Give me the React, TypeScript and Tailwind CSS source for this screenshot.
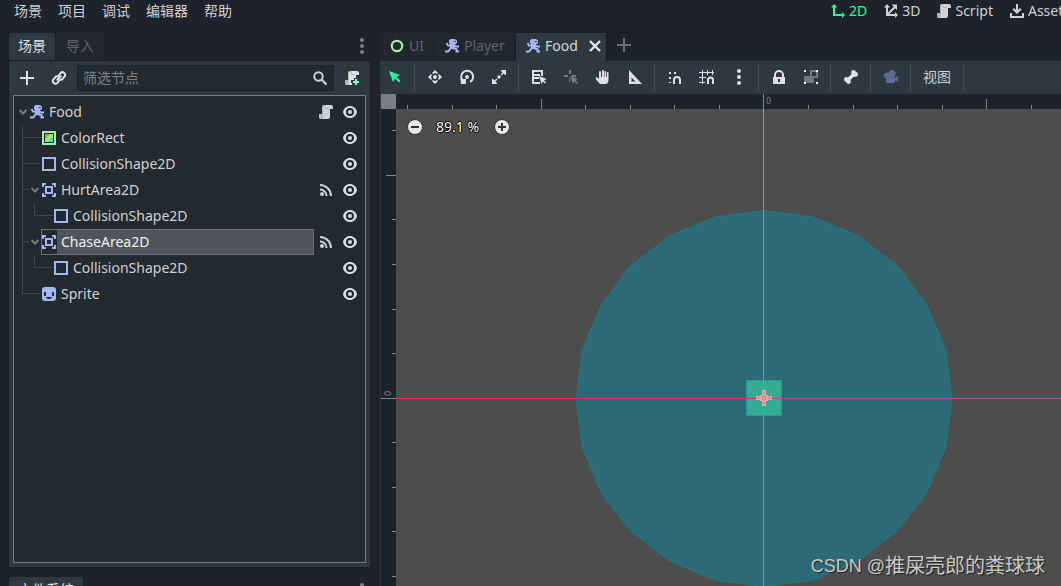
import { useState, type ReactNode } from "react";
import { clsx } from "clsx";

type IconProps = { className?: string };

function Svg({ className, children }: { className?: string; children: ReactNode }) {
  return (
    <svg className={clsx("size-4 shrink-0", className)} viewBox="0 0 16 16" fill="currentColor" aria-hidden="true">
      {children}
    </svg>
  );
}

const RunnerIcon = ({ className }: IconProps) => (
  <Svg className={clsx("text-[#a5b7f3]", className)}>
    <path d="M6.500 1H11l2 1.500V5l-2 1.500H7L5 5V2.500z" />
    <path d="M6 6h5v5H6z" />
    <path d="M7 7.500H4L2.500 5M10 7l2 1.500h3M7 9.500 5.500 12 4 13.500H1M9 10.500l3.500.5v2.500H15" fill="none" stroke="currentColor" strokeWidth="2" />
    <path d="M9.500 3H12v1H9.500z" className="fill-[#3d4764]" />
  </Svg>
);

const ScriptIcon = ({ className }: IconProps) => (
  <Svg className={className}>
    <path d="M6 1a1 1 0 0 0-1 1v11H4v-2H1v2a2 2 0 0 0 2 2h7a2 2 0 0 0 2-2V5h3V3a2 2 0 0 0-2-2z" />
    <path d="M6 1a2 2 0 0 0-2 2v7H1v3a2 2 0 0 0 4 0V3a1 1 0 0 1 2 0v2h4V4H8V3a2 2 0 0 0-2-2z" className="fill-[#b4b6b8]" />
  </Svg>
);

const ScriptCreateIcon = () => (
  <Svg>
    <path d="M6 1a1 1 0 0 0-1 1v11H4v-2H1v2a2 2 0 0 0 2 2h5v-2h-1v-3h3V8h2V5h3V3a2 2 0 0 0-2-2z" />
    <path d="M6 1a2 2 0 0 0-2 2v7H1v3a2 2 0 0 0 4 0V3a1 1 0 0 1 2 0v2h4V4H8V3a2 2 0 0 0-2-2z" className="fill-[#b4b6b8]" />
    <path d="M11 9h2v2h2v2h-2v2h-2v-2H9v-2h2z" className="fill-[#84ffb1]" />
  </Svg>
);

const AddIcon = ({ className }: IconProps) => (
  <Svg className={className}>
    <path d="M7 1v6H1v2h6v6h2V9h6V7H9V1z" />
  </Svg>
);

const LinkIcon = () => (
  <Svg>
    <g fill="none" stroke="currentColor" strokeWidth="2" strokeLinecap="round">
      <path d="M7 6.500 9.500 3.200a2.600 2.600 0 0 1 4 3.400L11 9.500 8.500 9.700" />
      <path d="M9 9.500 6.500 12.800a2.600 2.600 0 0 1-4-3.400L5 6.500l2.500-.2" />
      <path d="M6.200 9.800 9.800 6.200" />
    </g>
  </Svg>
);

const SearchIcon = () => (
  <Svg>
    <path d="M9.500 9.500 14.500 14.500" stroke="currentColor" strokeWidth="2.200" />
    <circle cx="6.500" cy="6.500" r="4.200" fill="none" stroke="currentColor" strokeWidth="2" />
  </Svg>
);

const DotsIcon = ({ className }: IconProps) => (
  <Svg className={className}>
    <circle cx="8" cy="2" r="2" />
    <circle cx="8" cy="8" r="2" />
    <circle cx="8" cy="14" r="2" />
  </Svg>
);

const EyeIcon = () => (
  <Svg>
    <path
      fillRule="evenodd"
      d="M8 2C4.500 2 1.700 4.500 1 8c.7 3.500 3.500 6 7 6s6.300-2.500 7-6c-.7-3.500-3.500-6-7-6zm0 2a4 4 0 0 1 0 8 4 4 0 0 1 0-8z"
    />
    <circle cx="8" cy="8" r="2" />
  </Svg>
);

const SignalIcon = () => (
  <Svg>
    <circle cx="4" cy="12" r="2" />
    <path d="M2 7.500a6.500 6.500 0 0 1 6.500 6.500M2 3a11 11 0 0 1 11 11" fill="none" stroke="currentColor" strokeWidth="2" />
  </Svg>
);

const ColorRectIcon = () => (
  <Svg>
    <path d="M2 2h12v12H2z" fill="none" stroke="#a5efac" strokeWidth="2" />
    <path d="M4 4h4.500L4 8.500z" className="fill-[#ff7070]" />
    <path d="M8.500 4H12v3.500L7.500 12H4V8.500z" className="fill-[#7aff70]" />
    <path d="M12 7.500V12H7.500z" className="fill-[#70bfff]" />
  </Svg>
);

const ShapeIcon = () => (
  <Svg className="text-[#a5b7f3]">
    <path d="M2 2h12v12H2z" fill="none" stroke="currentColor" strokeWidth="2" />
  </Svg>
);

const AreaIcon = () => (
  <Svg className="text-[#a5b7f3]">
    <path d="M2 5V2h3M11 2h3v3M14 11v3h-3M5 14H2v-3M5 5h6v6H5z" fill="none" stroke="currentColor" strokeWidth="2" />
  </Svg>
);

const SpriteIcon = () => (
  <Svg className="text-[#a5b7f3]">
    <path
      fillRule="evenodd"
      d="M4 1h8a3 3 0 0 1 3 3v8a3 3 0 0 1-3 3H4a3 3 0 0 1-3-3V4a3 3 0 0 1 3-3zM3 6v4h2V6zm8 0v4h2V6zM5 11c.5 2.700 5.500 2.700 6 0z"
    />
  </Svg>
);

const ChevronIcon = () => (
  <svg className="h-2 w-2.5" viewBox="0 0 10 8" fill="none" stroke="#767c80" strokeWidth="2" aria-hidden="true">
    <path d="m1.500 2 3.500 3.500L8.500 2" />
  </svg>
);

const Icon2D = () => (
  <Svg className="text-[#21ff9a]">
    <path d="M4 3v9h9" fill="none" stroke="currentColor" strokeWidth="2" />
    <path d="M4 1l3 3.500H1zM15 12l-3 3V9z" />
  </Svg>
);

const Icon3D = () => (
  <Svg>
    <path d="M4 3v9h9M4 12l8-8" fill="none" stroke="currentColor" strokeWidth="2" />
    <path d="M4 1l3 3.500H1zM15 12l-3 3V9zM8.500 1.500H14v5.500z" />
  </Svg>
);

const AssetIcon = () => (
  <Svg>
    <path d="M8 1v7M2 10v4h12v-4" fill="none" stroke="currentColor" strokeWidth="2" />
    <path d="m8 11 4.500-4.500L11 5 8 8 5 5 3.500 6.500z" />
  </Svg>
);

const SelectIcon = () => (
  <Svg className="text-[#21ff9a]">
    <path d="m2 2 4 11 2-3.500 4 4 1.500-1.500-4-4L13 6z" />
  </Svg>
);

const MoveIcon = () => (
  <Svg>
    <path d="m8 1 3 3-1 1-2-1-2 1-1-1zM8 15l3-3-1-1-2 1-2-1-1 1zM1 8l3-3 1 1-1 2 1 2-1 1zM15 8l-3-3-1 1 1 2-1 2 1 1z" />
    <circle cx="8" cy="8" r="2" />
  </Svg>
);

const RotateIcon = () => (
  <Svg>
    <path d="M4.500 12.500A6 6 0 1 1 11 13" fill="none" stroke="currentColor" strokeWidth="2" />
    <path d="M1.500 10H7v5H2z" />
    <circle cx="8" cy="8" r="2" />
  </Svg>
);

const ScaleIcon = () => (
  <Svg>
    <path d="M10 1h5v5h-1l-1.500-1.500-2 2-1-1 2-2L10 2zM1 10v5h5v-1l-1.500-1.500 2-2-1-1-2 2L2 10z" />
    <circle cx="8" cy="8" r="1.700" />
  </Svg>
);

const ListSelectIcon = () => (
  <Svg>
    <path d="M1 1h11v6h-2V3H3v2h6v2H3v1h5v2H3v3h6v2H1z" />
    <path d="m8 7 2.500 8 1.500-2.500 2 2 1-1-2-2L15.500 10z" />
  </Svg>
);

const PivotIcon = () => (
  <Svg className="text-[#747b80]">
    <path d="M6 1h2v4H6zM1 6h4v2H1zM9 6h4v2H9zM6 9h1v4H6zM7 7l3 8 1.500-2.500 2.500 2.500 1-1-2.500-2.500L15 10z" />
  </Svg>
);

const HandIcon = () => (
  <Svg>
    <path d="M8 1a1 1 0 0 0-1 1v6H6V3a1 1 0 0 0-2 0v7L2.800 8.700a1.200 1.200 0 0 0-1.900 1.500L4.500 14.500c.5.400 1 .5 1.500.5h4c2 0 3.500-1.500 3.500-4V4a.9.9 0 0 0-1.800 0v4H11V2.500a1 1 0 0 0-1.500 0V8H9V2a1 1 0 0 0-1-1z" />
  </Svg>
);

const RulerIcon = () => (
  <Svg>
    <path fillRule="evenodd" d="M2 1v14h13zm2.500 7.500 4 4h-4z" />
  </Svg>
);

const SnapIcon = () => (
  <Svg>
    <path d="M2 3h2v2H2zM7 3h2v2H7zM2 8h2v2H2zM2 13h2v1H2z" />
    <path d="M7 15v-4a3 3 0 0 1 6 0v4" fill="none" stroke="currentColor" strokeWidth="2" />
  </Svg>
);

const SnapGridIcon = () => (
  <Svg>
    <path d="M3.500 1v14M8.500 1v5M13.500 1v5M0 3.500h15M0 8.500h7M0 13.500h6" fill="none" stroke="currentColor" />
    <path d="M9 15v-4a2.500 2.500 0 0 1 5 0v4" fill="none" stroke="currentColor" strokeWidth="2" />
  </Svg>
);

const LockIcon = () => (
  <Svg>
    <path
      fillRule="evenodd"
      d="M8 1a5 5 0 0 0-5 5v2H2v7h12V8h-1V6a5 5 0 0 0-5-5zm0 2a3 3 0 0 1 3 3v2H5V6a3 3 0 0 1 3-3zM7 10h2v3H7z"
    />
  </Svg>
);

const GroupIcon = () => (
  <Svg>
    <path fillRule="evenodd" d="M7 1h8v8h-4v5H1V7h6zm2 2v4h4V3z" className="fill-[#747a7f]" />
    <path d="M1 1h2v2H1zM13 1h2v2h-2zM1 13h2v2H1zM13 13h2v2h-2z" className="fill-white" />
  </Svg>
);

const BoneIcon = () => (
  <Svg>
    <path d="m4.500 11.500 7-7" stroke="currentColor" strokeWidth="3.600" />
    <circle cx="10.500" cy="3.500" r="2.400" />
    <circle cx="12.600" cy="5.500" r="2.400" />
    <circle cx="3.400" cy="10.500" r="2.400" />
    <circle cx="5.500" cy="12.500" r="2.400" />
  </Svg>
);

const CameraIcon = () => (
  <Svg className="text-[#5c6c93]">
    <circle cx="9" cy="4.500" r="3.500" />
    <circle cx="4" cy="6.500" r="3" />
    <path d="M3 6h9v3l3-2v6l-3-2v1.500c0 .8-.5 1.500-1.500 1.500h-6C3.500 14 3 13.500 3 12.500z" />
  </Svg>
);

const CloseIcon = () => (
  <Svg className="text-[#e6e8e9]">
    <path d="m3 3 10 10M13 3 3 13" stroke="currentColor" strokeWidth="2.400" />
  </Svg>
);

const RingIcon = () => (
  <Svg>
    <circle cx="8" cy="8" r="5.200" fill="none" stroke="#a5efac" strokeWidth="2.200" />
  </Svg>
);

type TreeNode = {
  id: string;
  name: string;
  icon: () => ReactNode;
  level: 0 | 1 | 2;
  open?: boolean;
  script?: boolean;
  signal?: boolean;
  last?: boolean;
};

const NODES: TreeNode[] = [
  { id: "food", name: "Food", icon: () => <RunnerIcon />, level: 0, open: true, script: true },
  { id: "rect", name: "ColorRect", icon: ColorRectIcon, level: 1 },
  { id: "shape", name: "CollisionShape2D", icon: ShapeIcon, level: 1 },
  { id: "hurt", name: "HurtArea2D", icon: AreaIcon, level: 1, open: true, signal: true },
  { id: "hurt-shape", name: "CollisionShape2D", icon: ShapeIcon, level: 2, last: true },
  { id: "chase", name: "ChaseArea2D", icon: AreaIcon, level: 1, open: true, signal: true },
  { id: "chase-shape", name: "CollisionShape2D", icon: ShapeIcon, level: 2, last: true },
  { id: "sprite", name: "Sprite", icon: SpriteIcon, level: 1, last: true },
];

const MENUS = ["场景", "项目", "调试", "编辑器", "帮助"];

const MODES = [
  { label: "2D", icon: <Icon2D />, active: true },
  { label: "3D", icon: <Icon3D /> },
  { label: "Script", icon: <ScriptIcon /> },
  { label: "AssetLib", icon: <AssetIcon /> },
];

const TOOLS: { label: string; icon: ReactNode }[][] = [
  [
    { label: "移动模式", icon: <MoveIcon /> },
    { label: "旋转模式", icon: <RotateIcon /> },
    { label: "缩放模式", icon: <ScaleIcon /> },
  ],
  [
    { label: "列表选择", icon: <ListSelectIcon /> },
    { label: "轴心", icon: <PivotIcon /> },
    { label: "平移模式", icon: <HandIcon /> },
    { label: "标尺模式", icon: <RulerIcon /> },
  ],
  [
    { label: "智能吸附", icon: <SnapIcon /> },
    { label: "栅格吸附", icon: <SnapGridIcon /> },
    { label: "吸附选项", icon: <DotsIcon /> },
  ],
  [
    { label: "锁定", icon: <LockIcon /> },
    { label: "编组", icon: <GroupIcon /> },
  ],
  [{ label: "骨骼", icon: <BoneIcon /> }],
  [{ label: "相机", icon: <CameraIcon /> }],
];

function Guide({ className, last }: { className: string; last?: boolean }) {
  return (
    <span className={clsx("flex h-full shrink-0 flex-col", className)}>
      <span className="h-[13px] border-b border-l border-[#3f474d]" />
      {!last && <span className="flex-1 border-l border-[#3f474d]" />}
    </span>
  );
}

function TreeRow({ node, selected, onSelect }: { node: TreeNode; selected: boolean; onSelect: () => void }) {
  const Icon = node.icon;
  return (
    <li className={clsx("flex h-[26px] items-center pr-[3px]", node.level === 0 ? "pl-0.5" : "pl-2")}>
      {node.level === 1 && <Guide className={node.open ? "w-[7px]" : "w-[19px]"} last={node.last} />}
      {node.level === 2 && (
        <>
          <span className="h-full w-3 shrink-0 border-l border-[#3f474d]" />
          <Guide className="w-[19px]" last={node.last} />
        </>
      )}
      {node.open && (
        <button
          type="button"
          aria-label="折叠"
          className={clsx("flex shrink-0 items-center justify-center", node.level === 0 ? "w-[13px]" : "w-3")}
        >
          <ChevronIcon />
        </button>
      )}
      <button
        type="button"
        onClick={onSelect}
        className={clsx(
          "flex h-full min-w-0 flex-1 items-center border text-left",
          selected ? "border-[#6b7074] bg-[#50555a] text-[#f0f1f1]" : "border-transparent",
        )}
      >
        <span className={clsx("flex h-full w-[15px] shrink-0 items-center justify-end", selected && "bg-[#22292f]")}>
          <Icon />
        </span>
        <span className="truncate pl-1">{node.name}</span>
      </button>
      <span className="flex w-6 shrink-0 justify-center">
        {node.script && <button type="button" aria-label="打开脚本"><ScriptIcon /></button>}
        {node.signal && <button type="button" aria-label="信号"><SignalIcon /></button>}
      </span>
      <button type="button" aria-label="切换可见性" className="flex w-6 shrink-0 justify-center text-[#dcdddd]">
        <EyeIcon />
      </button>
    </li>
  );
}

function SceneDock() {
  const [selected, setSelected] = useState("chase");
  const [filter, setFilter] = useState("");

  return (
    <section className="flex min-h-0 flex-1 flex-col">
      <div className="flex h-7 items-stretch gap-0.5">
        <button type="button" className="bg-[#2e3840] px-[9px] pb-0.5 text-[#e0e1e2]">场景</button>
        <button type="button" className="bg-[#22272e] px-[9px] pb-0.5 text-[#60656a]">导入</button>
        <button type="button" aria-label="停靠选项" className="ml-auto flex items-center pb-0.5 text-[#7b7e82]">
          <DotsIcon />
        </button>
      </div>
      <div className="flex min-h-0 flex-1 flex-col gap-1 bg-[#2e3840] p-1 outline outline-[#191c22]">
        <div className="flex h-[26px] items-center">
          <button type="button" aria-label="添加节点" className="flex w-7 justify-center text-[#e0e0e0]"><AddIcon /></button>
          <button type="button" aria-label="实例化场景" className="ml-1 flex w-7 justify-center text-[#e0e0e0]"><LinkIcon /></button>
          <label className="ml-1 flex h-full min-w-0 flex-1 items-center border border-[#1f252b] bg-[#22292f] pr-[5px] pl-[5px]">
            <input
              type="text"
              aria-label="筛选节点"
              placeholder="筛选节点"
              value={filter}
              onChange={(e) => setFilter(e.target.value)}
              className="min-w-0 flex-1 bg-transparent outline-none placeholder:text-[#7f8487]"
            />
            <SearchIcon />
          </label>
          <button type="button" aria-label="附加脚本" className="ml-1 flex w-7 justify-center text-[#e0e0e0]"><ScriptCreateIcon /></button>
        </div>
        <ul className="min-h-0 flex-1 overflow-hidden border border-[#747b7e] bg-[#22292f] pt-[3px]">
          {NODES.filter((n) => n.name.toLowerCase().includes(filter.toLowerCase())).map((n) => (
            <TreeRow key={n.id} node={n} selected={n.id === selected} onSelect={() => setSelected(n.id)} />
          ))}
        </ul>
      </div>
    </section>
  );
}

const TICKS_X = [11, 56, 100, 145, 189, 234, 278, 323, 367, 412, 457, 501, 546, 590, 635];
const TICKS_Y = [21, 66, 110, 155, 200, 244, 289, 333, 378, 422, 467];

// Godot draws circle shapes as a 24-sided polygon
const CIRCLE = Array.from({ length: 24 }, (_, i) => {
  const a = (i * Math.PI) / 12;
  return `${(368 + 188 * Math.sin(a)).toFixed(1)},${(289.5 - 188 * Math.cos(a)).toFixed(1)}`;
}).join(" ");

function TopRuler() {
  return (
    <svg className="h-[15px] w-full" fill="#81868a" aria-hidden="true">
      {TICKS_X.map((x, i) => {
        const h = x === 367 ? 15 : i % 5 === 3 ? 10 : 4;
        return <rect key={x} x={x} y={15 - h} width="1" height={h} />;
      })}
      <text x="370" y="10" fontSize="9">0</text>
    </svg>
  );
}

function SideRuler() {
  return (
    <svg className="h-full w-[15px] shrink-0" fill="#81868a" aria-hidden="true">
      {TICKS_Y.map((y, i) => {
        const w = y === 289 ? 15 : i === 1 ? 10 : 4;
        return <rect key={y} x={15 - w} y={y} width={w} height="1" />;
      })}
      <text transform="translate(10 287) rotate(-90)" fontSize="9">0</text>
    </svg>
  );
}

function Viewport() {
  return (
    <div className="relative min-w-0 flex-1 overflow-hidden bg-[#4d4d4d]">
      <svg className="block size-full" aria-hidden="true">
        <polygon points={CIRCLE} fill="#2c6a75" stroke="#1d7985" />
        <rect x="350.500" y="271.500" width="35" height="35" fill="#35ab8f" stroke="#1d9da3" />
        <rect x="367" y="0" width="1" height="289" fill="#7db52f" />
        <rect x="367" y="290" width="1" height="187" fill="#749783" />
        <rect x="0" y="289" width="367" height="1" fill="#dc3348" />
        <rect x="368" y="289" width="100%" height="1" fill="#b044a4" />
        <path d="M366 281h4v5h2v1h4v4h-4v1h-2v5h-4v-5h-2v-1h-4v-4h4v-1h2z" fill="#c6b5ad" />
        <path d="M367 282h2v3h-2zM367 293h2v3h-2zM361 288h3v2h-3zM372 288h3v2h-3z" fill="#ff7d7d" />
        <circle cx="368" cy="289" r="2.500" fill="#ff8484" />
      </svg>
      <div className="absolute top-2 left-[11px] flex items-center text-white">
        <button type="button" aria-label="缩小">
          <Svg className="text-[#e8e8e8]">
            <circle cx="8" cy="8" r="7.500" stroke="#333" />
            <path d="M4 7h8v2H4z" fill="#333" />
          </Svg>
        </button>
        <button
          type="button"
          className="w-[71px] pr-0.5 text-center [text-shadow:1px_0_#000,-1px_0_#000,0_1px_#000,0_-1px_#000]"
        >
          89.1 %
        </button>
        <button type="button" aria-label="放大">
          <Svg className="text-[#e8e8e8]">
            <circle cx="8" cy="8" r="7.500" stroke="#333" />
            <path d="M4 7h3V4h2v3h3v2H9v3H7V9H4z" fill="#333" />
          </Svg>
        </button>
      </div>
      <p className="absolute right-4 bottom-1.5 flex items-center text-xl whitespace-pre text-[#c9c9c9] [text-shadow:1px_1px_1px_#222]">
        <span className="font-['Liberation_Sans'] text-lg">CSDN @</span>
        <span>推屎壳郎的粪球球</span>
      </p>
    </div>
  );
}

const Separator = () => <span className="mx-[3px] my-[3px] w-px shrink-0 self-stretch bg-[#444d54]" />;

function Editor() {
  return (
    <main className="flex min-w-0 flex-1 flex-col">
      <div className="flex h-7 items-stretch gap-0.5 text-[#5f6469]">
        <button type="button" className="flex w-[53px] items-center gap-1 bg-[#22272e] pb-0.5 pl-[9px]"><RingIcon />UI</button>
        <button type="button" className="flex w-[79px] items-center gap-1 bg-[#22272e] pb-0.5 pl-[9px]"><RunnerIcon />Player</button>
        <div className="flex w-[90px] items-center bg-[#2e3840] pb-0.5 pl-[9px] text-[#d5d7d8] outline outline-[#191c22]">
          <button type="button" className="flex items-center gap-1"><RunnerIcon />Food</button>
          <button type="button" aria-label="关闭" className="ml-[9px]"><CloseIcon /></button>
        </div>
        <button type="button" aria-label="新建场景" className="ml-2 flex items-center pb-1 text-[#6f7377]"><AddIcon /></button>
      </div>
      <div className="flex min-h-0 flex-1 flex-col border-l border-[#2e3840]">
        <div className="flex h-[33px] shrink-0 items-center bg-[#2e3840] text-[#e0e0e0]">
          <button type="button" aria-label="选择模式" className="flex w-[30px] pb-0.5 pl-[6px]"><SelectIcon /></button>
          {TOOLS.map((group, i) => (
            <div key={i} className="flex h-full items-center">
              <Separator />
              {group.map((tool) => (
                <button key={tool.label} type="button" aria-label={tool.label} className="flex w-8 justify-center pb-px pl-0.5">
                  {tool.icon}
                </button>
              ))}
              {/* one extra pixel keeps every group on an even pitch */}
              <span className="w-px" />
            </div>
          ))}
          <Separator />
          <button type="button" className="px-[9px] pb-0.5 text-[#cfd1d2]">视图</button>
          <Separator />
        </div>
        <div className="flex shrink-0 bg-[#1e222a]">
          <span className="size-[15px] shrink-0 bg-[#7b7d81]" />
          <TopRuler />
        </div>
        <div className="flex min-h-0 flex-1">
          <SideRuler />
          <Viewport />
        </div>
      </div>
    </main>
  );
}

export default function App() {
  return (
    <div className="flex h-screen flex-col overflow-hidden bg-[#1e222a] font-['Noto_Sans','Noto_Sans_CJK_SC',sans-serif] text-sm leading-5 text-[#cfd1d2]">
      <header className="flex h-[22px] shrink-0 items-center justify-between pl-3.5">
        <nav className="flex gap-4">
          {MENUS.map((m) => (
            <button key={m} type="button">{m}</button>
          ))}
        </nav>
        <div className="flex w-[231px] gap-4 overflow-hidden whitespace-nowrap">
          {MODES.map((m) => (
            <button key={m.label} type="button" className={clsx("flex shrink-0 items-center gap-[3px]", m.active && "text-[#21ff9a]")}>
              {m.icon}
              {m.label}
            </button>
          ))}
        </div>
      </header>
      <div className="flex min-h-0 flex-1 gap-2.5 pt-[11px] pl-[9px]">
        <aside className="flex w-[361px] shrink-0 flex-col gap-2.5">
          <SceneDock />
          <div className="flex h-[9px] shrink-0 items-start justify-between overflow-hidden">
            <button type="button" className="h-7 bg-[#2e3840] px-[9px] pb-0.5 text-[#e0e1e2]">文件系统</button>
            <span className="flex h-7 items-center text-[#7b7e82]"><DotsIcon /></span>
          </div>
        </aside>
        <Editor />
      </div>
    </div>
  );
}
